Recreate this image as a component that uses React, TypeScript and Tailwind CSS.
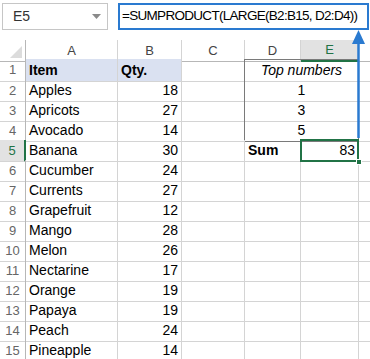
import React from 'react';

const rows: [string, number][] = [
    ['Apples', 18],
    ['Apricots', 27],
    ['Avocado', 14],
    ['Banana', 30],
    ['Cucumber', 24],
    ['Currents', 27],
    ['Grapefruit', 12],
    ['Mango', 28],
    ['Melon', 26],
    ['Nectarine', 17],
    ['Orange', 19],
    ['Papaya', 19],
    ['Peach', 24],
    ['Pineapple', 14],
];

const grid = "grid grid-cols-[26px_92px_64px_63px_56px_58px_11px]";
const cell = "border-r border-b border-[#d4d4d4] flex items-center px-[3px] whitespace-nowrap";
const rowHead = "border-r border-b border-[#d4d4d4] border-r-[#b7b7b7] flex items-center justify-center text-[#666] text-[13px]";

export default function App() {
    return (
        <div className="relative w-[370px] h-[359px] overflow-hidden bg-white font-['Liberation_Sans',Arial,sans-serif] text-[14px] text-black">
            {/* Name box + formula bar */}
            <div className="flex h-[40px] pt-[3px] pl-[2px]">
                <div className="flex h-[27px] w-[106px] items-center justify-between border border-[#c6c6c6] pl-[10px] pr-[6px] text-[14px] text-[#333]">
                    <span>E5</span>
                    <svg width="9" height="5" viewBox="0 0 9 5"><path d="M0 0h9L4.5 5z" fill="#8a8a8a" /></svg>
                </div>
                <div className="ml-[10px] flex h-[27px] w-[251px] items-center border-2 border-[#2a7ad0] pl-[2px] text-[13.5px] tracking-[-0.7px] whitespace-nowrap">
                    =SUMPRODUCT(LARGE(B2:B15, D2:D4))
                </div>
            </div>

            {/* Column headers */}
            <div className={`${grid} h-[19px] text-[13px] text-[#444]`}>
                <div className="relative border-r border-b border-[#b7b7b7]">
                    <svg className="absolute right-[3px] bottom-[3px]" width="12" height="12" viewBox="0 0 12 12"><path d="M12 0v12H0z" fill="#dcdcdc" /></svg>
                </div>
                {['A', 'B', 'C', 'D'].map((c) => (
                    <div key={c} className="flex items-center justify-center border-r border-b border-[#d4d4d4] border-b-[#b7b7b7]">{c}</div>
                ))}
                <div className="flex items-center justify-center border-r border-[#d4d4d4] border-b-2 border-b-[#217346] bg-[#e2e2e2] text-[#217346]">E</div>
                <div className="border-b border-[#b7b7b7]" />
            </div>

            {/* Row 1 */}
            <div className={`${grid} h-[21px]`}>
                <div className={rowHead}>1</div>
                <div className={`${cell} bg-[#dae1f1] font-bold`}>Item</div>
                <div className={`${cell} bg-[#dae1f1] font-bold`}>Qty.</div>
                <div className={`${cell} border-r-[#7a7a7a]`} />
                <div className={`${cell} col-span-2 justify-center border-r-[#7a7a7a] border-t border-t-[#7a7a7a] italic`}>Top numbers</div>
                <div className="border-b border-[#d4d4d4]" />
            </div>

            {rows.map(([name, qty], i) => {
                const n = i + 2;
                const top = [1, 3, 5][i];
                const isSum = n === 5;
                return (
                    <div key={name} className={`${grid} h-[20px]`}>
                        <div className={isSum ? "flex items-center justify-center border-b border-[#d4d4d4] border-r-2 border-r-[#217346] bg-[#e2e2e2] text-[#217346] text-[13px]" : rowHead}>{n}</div>
                        <div className={cell}>{name}</div>
                        <div className={`${cell} justify-end`}>{qty}</div>
                        <div className={`${cell} ${n <= 4 ? 'border-r-[#7a7a7a]' : ''}`} />
                        {n <= 4 ? (
                            <div className={`${cell} col-span-2 justify-center border-r-[#7a7a7a] ${n === 4 ? 'border-b-[#7a7a7a]' : ''}`}>{top}</div>
                        ) : isSum ? (
                            <>
                                <div className={`${cell} font-bold`}>Sum</div>
                                <div className={`${cell} relative justify-end`}>
                                    83
                                    <div className="absolute -left-px -top-px -right-px -bottom-px border-2 border-[#217346]" />
                                    <div className="absolute -right-[4px] -bottom-[4px] h-[6px] w-[6px] border border-white bg-[#217346]" />
                                </div>
                            </>
                        ) : (
                            <>
                                <div className={cell} />
                                <div className={cell} />
                            </>
                        )}
                        <div className="border-b border-[#d4d4d4]" />
                    </div>
                );
            })}

            {/* Arrow from E5 up to formula bar */}
            <svg className="absolute left-[350px] top-[29px]" width="18" height="112" viewBox="0 0 18 112">
                <line x1="8.5" y1="10" x2="8.5" y2="109" stroke="#2a7ad0" strokeWidth="2.5" />
                <path d="M8.5 1L15 15H2z" fill="#2a7ad0" />
            </svg>
        </div>
    );
}
